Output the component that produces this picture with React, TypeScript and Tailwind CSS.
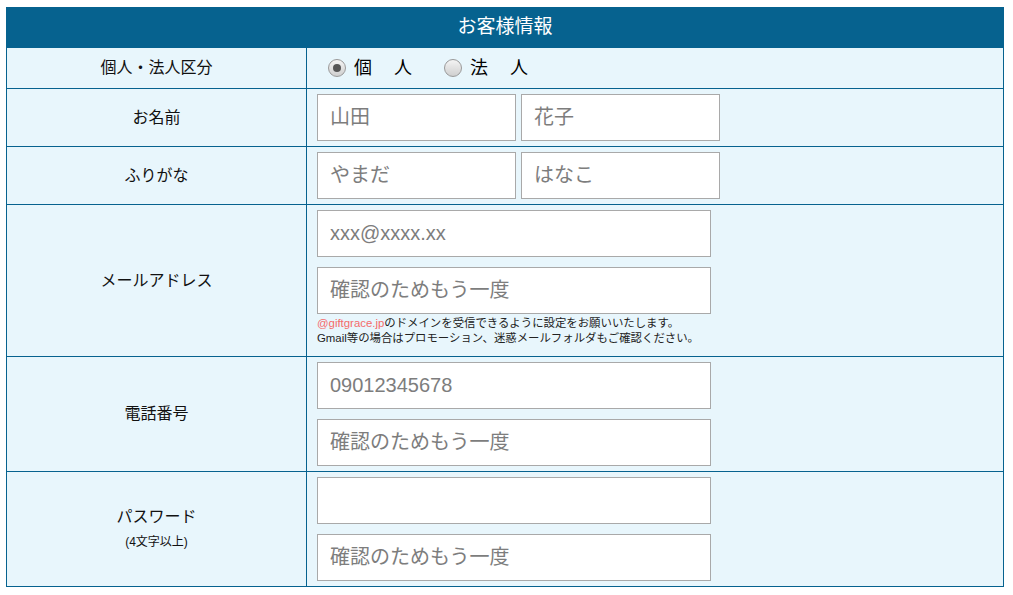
import React from "react";

function Radio({ checked, label }: { checked?: boolean; label: string }) {
  return (
    <label className="flex items-center gap-[8px]">
      <span className="flex h-[18px] w-[18px] items-center justify-center rounded-full border border-[#9a9a9a] bg-gradient-to-b from-[#f4f4f4] to-[#cfcfcf]">
        {checked && <span className="h-[8px] w-[8px] rounded-full bg-[#555]" />}
      </span>
      <span className="text-[18px] tracking-[2px] text-black">{label}</span>
    </label>
  );
}

function Field({ ph, wide, className = "" }: { ph?: string; wide?: boolean; className?: string }) {
  return (
    <input
      type="text"
      placeholder={ph}
      className={`${wide ? "w-[394px]" : "w-[199px]"} block h-[47px] border border-[#a9a9a9] bg-white px-[12px] text-[20px] text-[#555] outline-none placeholder:text-[#7d7d7d] ${className}`}
    />
  );
}

const label = "border border-[#06628f] text-center align-middle text-[16px] text-[#111]";
const cell = "border border-[#06628f] px-[10px] py-[5px] align-middle";

export default function App() {
  return (
    <div className="bg-white pt-[7px] pl-[6px] font-['Liberation_Sans','Noto_Sans_CJK_JP',sans-serif]">
      <table className="w-[998px] table-fixed border-collapse bg-[#e8f6fc]">
        <colgroup>
          <col className="w-[300px]" />
          <col />
        </colgroup>
        <thead>
          <tr>
            <th colSpan={2} className="h-[40px] border border-[#06628f] bg-[#06628f] text-center text-[19px] font-normal text-white">
              お客様情報
            </th>
          </tr>
        </thead>
        <tbody>
          <tr>
            <td className={`${label} h-[41px]`}>個人・法人区分</td>
            <td className="border border-[#06628f] px-[21px] align-middle">
              <div className="flex items-center gap-[30px]">
                <Radio checked label="個　人" />
                <Radio label="法　人" />
              </div>
            </td>
          </tr>
          <tr>
            <td className={label}>お名前</td>
            <td className={cell}>
              <div className="flex gap-[5px]">
                <Field ph="山田" />
                <Field ph="花子" />
              </div>
            </td>
          </tr>
          <tr>
            <td className={label}>ふりがな</td>
            <td className={cell}>
              <div className="flex gap-[5px]">
                <Field ph="やまだ" />
                <Field ph="はなこ" />
              </div>
            </td>
          </tr>
          <tr>
            <td className={label}>メールアドレス</td>
            <td className={cell}>
              <Field wide ph="xxx@xxxx.xx" />
              <Field wide ph="確認のためもう一度" className="mt-[10px]" />
              <p className="mt-[2px] mb-[5px] text-[11.4px] leading-[15px] text-[#222]">
                <span className="text-[#f56a6a]">@giftgrace.jp</span>のドメインを受信できるように設定をお願いいたします。
                <br />
                Gmail等の場合はプロモーション、迷惑メールフォルダもご確認ください。
              </p>
            </td>
          </tr>
          <tr>
            <td className={label}>電話番号</td>
            <td className={cell}>
              <Field wide ph="09012345678" />
              <Field wide ph="確認のためもう一度" className="mt-[10px]" />
            </td>
          </tr>
          <tr>
            <td className={label}>
              <div className="-mt-[2px]">パスワード</div>
              <div className="mt-[4px] text-[12px]">(4文字以上)</div>
            </td>
            <td className={cell}>
              <Field wide />
              <Field wide ph="確認のためもう一度" className="mt-[10px]" />
            </td>
          </tr>
        </tbody>
      </table>
    </div>
  );
}
